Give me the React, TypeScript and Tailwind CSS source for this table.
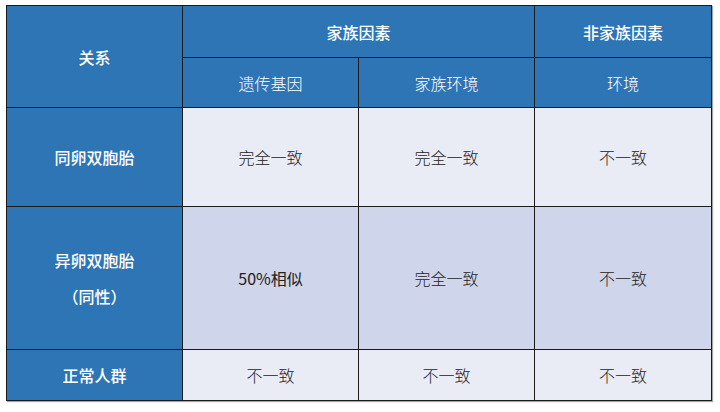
import React from "react";

const head = "bg-[#2e75b6] text-white border border-[#1a1a1a] text-center align-middle";
const light = "bg-[#e9ebf5] text-[#222] border border-[#1a1a1a] text-center align-middle";
const dark = "bg-[#cfd5ea] text-[#222] border border-[#1a1a1a] text-center align-middle";

export default function App() {
  return (
    <div
      className="w-[720px] h-[412px] bg-white pl-[6px] pt-[5px]"
      style={{ fontFamily: '"Noto Sans CJK SC", "Noto Sans", sans-serif' }}
    >
      <table className="border-collapse table-fixed w-[705px] text-[16px] shadow-[1px_1px_1px_rgba(0,0,0,0.35)]">
        <colgroup>
          <col className="w-[176px]" />
          <col className="w-[176px]" />
          <col className="w-[176px]" />
          <col className="w-[177px]" />
        </colgroup>
        <tbody>
          <tr className="h-[52px]">
            <td rowSpan={2} className={`${head} font-medium`}>关系</td>
            <td colSpan={2} className={`${head} font-medium`}>家族因素</td>
            <td className={`${head} font-medium`}>非家族因素</td>
          </tr>
          <tr className="h-[50px]">
            <td className={`${head} font-light`}>遗传基因</td>
            <td className={`${head} font-light`}>家族环境</td>
            <td className={`${head} font-light`}>环境</td>
          </tr>
          <tr className="h-[99px]">
            <td className={`${head} font-medium`}>同卵双胞胎</td>
            <td className={`${light} font-light`}>完全一致</td>
            <td className={`${light} font-light`}>完全一致</td>
            <td className={`${light} font-light`}>不一致</td>
          </tr>
          <tr className="h-[143px]">
            <td className={`${head} font-medium leading-[36px]`}>
              异卵双胞胎
              <br />
              （同性）
            </td>
            <td className={dark}>50%相似</td>
            <td className={`${dark} font-light`}>完全一致</td>
            <td className={`${dark} font-light`}>不一致</td>
          </tr>
          <tr className="h-[51px]">
            <td className={`${head} font-medium`}>正常人群</td>
            <td className={`${light} font-light`}>不一致</td>
            <td className={`${light} font-light`}>不一致</td>
            <td className={`${light} font-light`}>不一致</td>
          </tr>
        </tbody>
      </table>
    </div>
  );
}
